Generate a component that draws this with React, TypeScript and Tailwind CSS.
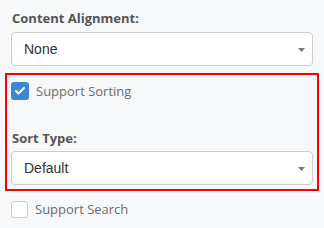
import { Check } from "lucide-react";

function Label({ children }: { children: React.ReactNode }) {
  return (
    <div className="text-[13px] leading-[18px] font-bold text-[#555] font-['Open_Sans',sans-serif] pl-[1px]">
      {children}
    </div>
  );
}

function Select({ value }: { value: string }) {
  return (
    <div className="h-[34px] bg-white border border-[#ccc] rounded-[4px] flex items-center pl-[12px] pr-[7px]">
      <span className="flex-1 text-[14px] text-[#333] font-['Liberation_Sans',Arial,sans-serif]">{value}</span>
      <svg width="7" height="4" viewBox="0 0 7 4" className="mt-[1px]">
        <path d="M0 0H7L3.5 4Z" fill="#777" />
      </svg>
    </div>
  );
}

function Checkbox({ checked, label }: { checked: boolean; label: string }) {
  return (
    <div className="flex items-center gap-[7px] h-[18px]">
      {checked ? (
        <div className="w-[18px] h-[18px] rounded-[3px] bg-[#3d86d7] flex items-center justify-center">
          <Check size={12} strokeWidth={4} className="text-white" />
        </div>
      ) : (
        <div className="w-[17px] h-[17px] rounded-[3px] bg-white border border-[#ccc]" />
      )}
      <span className="text-[13px] leading-[18px] text-[#6b6b6b] font-['Open_Sans',sans-serif]">{label}</span>
    </div>
  );
}

export default function App() {
  return (
    <div className="w-[324px] h-[228px] bg-[#f7f8fa] overflow-hidden pt-[9px]">
      <div className="px-[11px]">
        <Label>Content Alignment:</Label>
        <div className="mt-[5px]">
          <Select value="None" />
        </div>
      </div>
      <div className="mx-[5px] mt-[7px] border-2 border-[#ff0000] px-[4px] pt-[7px] pb-[4px]">
        <Checkbox checked label="Support Sorting" />
        <div className="mt-[29px]">
          <Label>Sort Type:</Label>
        </div>
        <div className="mt-[4px]">
          <Select value="Default" />
        </div>
      </div>
      <div className="px-[11px] mt-[9px]">
        <Checkbox checked={false} label="Support Search" />
      </div>
    </div>
  );
}
